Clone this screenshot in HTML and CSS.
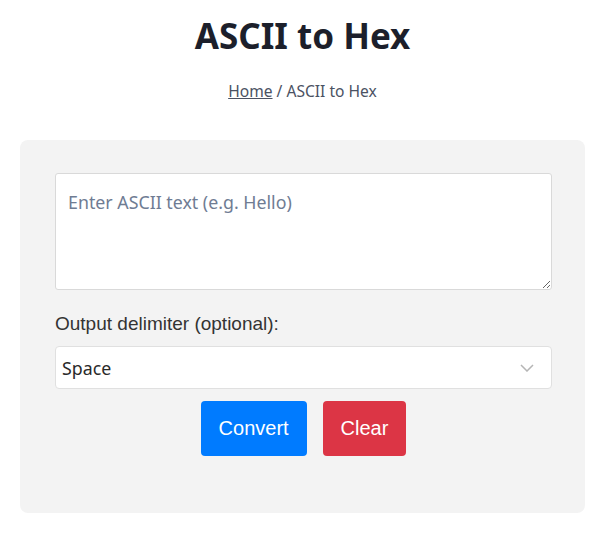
FILE: index.html
```html
<!DOCTYPE html>
<html lang="en">
<head>
<meta charset="utf-8">
<title>ASCII to Hex</title>
<link rel="stylesheet" href="styles.css">
</head>
<body>
<div class="page">
  <h1 class="title">ASCII to Hex</h1>
  <nav class="breadcrumb"><a href="#" class="crumb-link">Home</a> / ASCII to Hex</nav>
  <section class="card">
    <textarea class="input" placeholder="Enter ASCII text (e.g. Hello)"></textarea>
    <label class="label" for="delim">Output delimiter (optional):</label>
    <div class="select-wrap">
      <select id="delim" class="select">
        <option>Space</option>
        <option>None</option>
        <option>Comma</option>
      </select>
      <svg class="chevron" width="14" height="8" viewBox="0 0 14 8"><path d="M1 1l6 6 6-6" fill="none" stroke="#b5b5b5" stroke-width="1.5"/></svg>
    </div>
    <div class="actions">
      <button class="btn btn-primary">Convert</button>
      <button class="btn btn-danger">Clear</button>
    </div>
  </section>
</div>
</body>
</html>
```

FILE: styles.css
```css
* { box-sizing: border-box; }
html, body { margin: 0; padding: 0; background: #fff; }
body { font-family: "Noto Sans", "Open Sans", sans-serif; color: #1f2330; }
.page { padding: 0 15px 0 20px; }
.title {
  margin: 0;
  padding-top: 14px;
  text-align: center;
  font-size: 35px;
  font-weight: 700;
  line-height: 44px;
  color: #1c1f2b;
}
.breadcrumb {
  margin-top: 22px;
  text-align: center;
  font-size: 15.6px;
  line-height: 22px;
  color: #4b5263;
}
.crumb-link { color: #4b5263; text-decoration: underline; }
.card {
  margin-top: 38px;
  background: #f3f3f3;
  border-radius: 8px;
  padding: 33px 33px 57px 35px;
  display: flex;
  flex-direction: column;
}
.input {
  display: block;
  width: 100%;
  height: 117px;
  border: 1px solid #d9d9d9;
  border-radius: 3px;
  background: #fff;
  padding: 16px 12px 12px;
  font-family: "Noto Sans", sans-serif;
  font-size: 17.8px;
  color: #333;
  resize: vertical;
}
.input::placeholder { color: #6f7c93; }
.label {
  margin-top: 23px;
  font-family: "Liberation Sans", Arial, sans-serif;
  font-size: 19px;
  line-height: 22px;
  color: #333;
}
.select-wrap { position: relative; margin-top: 11px; }
.select {
  display: block;
  width: 100%;
  height: 43px;
  appearance: none;
  -webkit-appearance: none;
  background: #fff;
  border: 1px solid #e0e0e0;
  border-radius: 4px;
  padding: 0 6px;
  font-family: "Noto Sans", sans-serif;
  font-size: 17.8px;
  color: #2a2a2a;
}
.chevron { position: absolute; right: 18px; top: 18px; pointer-events: none; }
.actions {
  display: flex;
  justify-content: center;
  gap: 16px;
  margin-top: 12px;
}
.btn {
  height: 55px;
  border: none;
  border-radius: 4px;
  color: #fff;
  font-family: "Liberation Sans", Arial, sans-serif;
  font-size: 20px;
  padding: 0 18px;
}
.btn-primary { background: #007bff; }
.btn-danger { background: #dc3545; }
```
